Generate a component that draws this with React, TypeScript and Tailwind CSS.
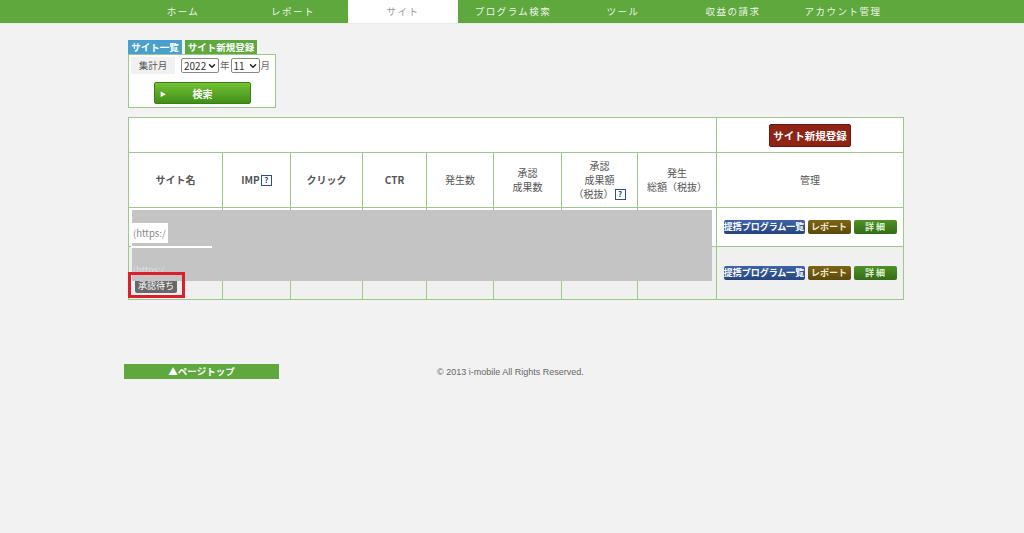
import { ChevronDown } from 'lucide-react'

const font = { fontFamily: '"Noto Sans CJK JP", "Noto Sans", sans-serif' }

const navItems = ['ホーム', 'レポート', 'サイト', 'プログラム検索', 'ツール', '収益の請求', 'アカウント管理']

function Help() {
  return (
    <span className="inline-flex items-center justify-center w-[11px] h-[11px] border border-[#2b4f8c] text-[#2b4f8c] text-[8px] font-bold leading-none bg-white ml-[1px] align-[1px]">
      ?
    </span>
  )
}

function Select({ value, w }: { value: string; w: string }) {
  return (
    <div className={`${w} h-[15px] border border-[#8a8a8a] rounded-[2px] bg-white flex items-center justify-between pl-[2px] pr-[1px] text-[10px] text-[#333] leading-none`}>
      <span>{value}</span>
      <ChevronDown size={10} strokeWidth={3.5} className="text-[#222]" />
    </div>
  )
}

function ManageButtons() {
  return (
    <div className="flex justify-center gap-[3px]">
      <span className="w-[81px] h-[14px] rounded-[2px] bg-gradient-to-b from-[#3d62a8] to-[#26467f] text-white text-[9px] font-bold leading-[14px] text-center whitespace-nowrap">
        提携プログラム一覧
      </span>
      <span className="w-[43px] h-[14px] rounded-[2px] bg-gradient-to-b from-[#7d6516] to-[#5c4a0c] text-[#f3ecd0] text-[9px] font-bold leading-[14px] text-center">
        レポート
      </span>
      <span className="w-[43px] h-[14px] rounded-[2px] bg-gradient-to-b from-[#4f9128] to-[#346d16] text-[#dcefd0] text-[9px] font-bold leading-[14px] text-center">
        詳 細
      </span>
    </div>
  )
}

export default function App() {
  const cell = 'border border-[#9cc88a] text-center align-middle p-0'
  return (
    <div className="w-[1024px] h-[533px] bg-[#f2f2f2] overflow-hidden" style={font}>
      {/* global nav */}
      <div className="h-[24px] bg-[#5ea83e] border-b border-[#e6eee0]">
        <div className="ml-[128px] flex h-full">
          {navItems.map((item) => (
            <div
              key={item}
              className={`w-[110px] h-full flex items-center justify-center text-[9.5px] tracking-[1.5px] ${
                item === 'サイト' ? 'bg-white text-[#9a9a9a]' : 'text-[#eef6e8]'
              }`}
            >
              {item}
            </div>
          ))}
        </div>
      </div>

      <div className="ml-[128px] mt-[16px] w-[775px]">
        {/* tabs */}
        <div className="flex gap-[3px]">
          <span className="w-[54px] h-[14px] bg-[#4aa0cc] text-white text-[9.5px] font-bold leading-[14px] text-center">
            サイト一覧
          </span>
          <span className="w-[72px] h-[14px] bg-[#5ea83e] text-white text-[9.5px] font-bold leading-[14px] text-center">
            サイト新規登録
          </span>
        </div>

        {/* search box */}
        <div className="w-[148px] h-[54px] border border-[#9cc88a] bg-white pt-[2px] pl-[2px]">
          <div className="flex items-center">
            <div className="w-[44px] h-[17px] bg-[#f1f1f1] text-[9.5px] text-[#555] flex items-center justify-center">
              集計月
            </div>
            <div className="ml-[6px] flex items-center gap-[1px] text-[9.5px] text-[#666]">
              <Select value="2022" w="w-[38px]" />
              <span>年</span>
              <Select value="11" w="w-[29px]" />
              <span>月</span>
            </div>
          </div>
          <div className="mt-[8px] ml-[23px] w-[97px] h-[22px] rounded-[2px] bg-gradient-to-b from-[#74c234] to-[#3f8f18] border border-[#3a7f16] flex items-center px-[5px] text-white">
            <span className="text-[6px]">▶</span>
            <span className="flex-1 text-center text-[10px] font-bold pr-[6px]">検索</span>
          </div>
        </div>

        {/* site table */}
        <div className="relative mt-[9px]">
          <table className="w-[775px] border-collapse table-fixed bg-white text-[10px] text-[#555]">
            <colgroup>
              <col className="w-[94px]" />
              <col className="w-[68px]" />
              <col className="w-[72px]" />
              <col className="w-[64px]" />
              <col className="w-[67px]" />
              <col className="w-[68px]" />
              <col className="w-[76px]" />
              <col className="w-[79px]" />
              <col className="w-[187px]" />
            </colgroup>
            <tbody>
              <tr className="h-[35px]">
                <td colSpan={8} className={cell}></td>
                <td className={cell}>
                  <div className="flex justify-center">
                    <div className="w-[82px] h-[23px] rounded-[2px] bg-[#8e2416] border border-[#6e160c] text-white text-[10.5px] font-bold leading-[21px] text-center whitespace-nowrap">
                      サイト新規登録
                    </div>
                  </div>
                </td>
              </tr>
              <tr className="h-[55px] leading-[14px]">
                <td className={`${cell} font-bold`}>サイト名</td>
                <td className={`${cell} font-bold`}>
                  IMP
                  <Help />
                </td>
                <td className={`${cell} font-bold`}>クリック</td>
                <td className={`${cell} font-bold`}>CTR</td>
                <td className={cell}>発生数</td>
                <td className={cell}>
                  承認
                  <br />
                  成果数
                </td>
                <td className={cell}>
                  承認
                  <br />
                  成果額
                  <br />
                  （税抜）
                  <Help />
                </td>
                <td className={cell}>
                  発生
                  <br />
                  総額（税抜）
                </td>
                <td className={cell}>管理</td>
              </tr>
              <tr className="h-[39px]">
                <td className={cell}></td>
                <td className={cell}></td>
                <td className={cell}></td>
                <td className={cell}></td>
                <td className={cell}></td>
                <td className={cell}></td>
                <td className={cell}></td>
                <td className={cell}></td>
                <td className={cell}>
                  <ManageButtons />
                </td>
              </tr>
              <tr className="h-[53px] bg-[#f0f0f0]">
                <td className="border border-[#9cc88a] align-top p-0 pt-[32px] pl-[6px]">
                  <div className="w-fit px-[3px] h-[14px] rounded-[2px] bg-[#686868] text-white text-[9px] leading-[14px] whitespace-nowrap">
                    承認待ち
                  </div>
                </td>
                <td className={cell}></td>
                <td className={cell}></td>
                <td className={cell}></td>
                <td className={cell}></td>
                <td className={cell}></td>
                <td className={cell}></td>
                <td className={cell}></td>
                <td className={cell}>
                  <ManageButtons />
                </td>
              </tr>
            </tbody>
          </table>

          {/* redaction overlay */}
          <div className="absolute left-[4px] top-[93px] w-[580px] h-[71px] bg-[#c4c4c4]"></div>
          <div className="absolute left-[3px] top-[106px] w-[37px] h-[20px] bg-white text-[9.5px] text-[#888] leading-[20px] pl-[2px]">
            (https:/
          </div>
          <div className="absolute left-[3px] top-[129px] w-[81px] h-[2px] bg-white"></div>
          <div className="absolute left-[5px] top-[147px] text-[9px] text-[#dedede] leading-[12px]">(https:/</div>

          {/* highlight frame */}
          <div className="absolute left-[0px] top-[155px] w-[57px] h-[26px] border-[3px] border-[#dd1f2b]"></div>
        </div>
      </div>

      {/* footer */}
      <div className="mt-[64px] flex items-center">
        <div className="ml-[124px] w-[155px] h-[15px] bg-[#5ea83e] text-white text-[9.5px] font-bold leading-[15px] text-center">
          ▲ページトップ
        </div>
        <div className="ml-[158px] mt-[2px] text-[9px] text-[#666]" style={{ fontFamily: '"Liberation Sans", sans-serif' }}>
          © 2013 i-mobile All Rights Reserved.
        </div>
      </div>
    </div>
  )
}
